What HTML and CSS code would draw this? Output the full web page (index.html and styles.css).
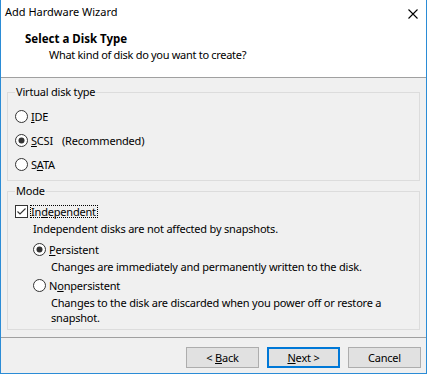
FILE: index.html
```html
<!DOCTYPE html>
<html>
  <head>
    <title>Add Hardware Wizard</title>
    <link rel="stylesheet" href="styles.css">
  </head>
  <body>
    <div class="window">
      <div class="titlebar">
        <span class="title">Add Hardware Wizard</span>
        <svg class="close" width="10" height="10" viewBox="0 0 10 10">
          <path d="M0.5 0.5 L9.5 9.5 M9.5 0.5 L0.5 9.5" stroke="#000" stroke-width="1.1" fill="none" />
        </svg>
      </div>

      <div class="header">
        <div class="heading">Select a Disk Type</div>
        <div class="subheading">What kind of disk do you want to create?</div>
      </div>

      <div class="content">
        <fieldset class="group group-type">
          <legend>Virtual disk type</legend>
          <div class="option">
            <svg class="radio" width="13" height="13" viewBox="0 0 13 13">
              <circle cx="6.5" cy="6.5" r="6" fill="#fff" stroke="#333" />
            </svg>
            <span><u>I</u>DE</span>
          </div>
          <div class="option">
            <svg class="radio" width="13" height="13" viewBox="0 0 13 13">
              <circle cx="6.5" cy="6.5" r="6" fill="#fff" stroke="#333" />
              <circle cx="6.5" cy="6.5" r="3" fill="#333" />
            </svg>
            <span><u>S</u>CSI</span>
            <span class="hint">(Recommended)</span>
          </div>
          <div class="option">
            <svg class="radio" width="13" height="13" viewBox="0 0 13 13">
              <circle cx="6.5" cy="6.5" r="6" fill="#fff" stroke="#333" />
            </svg>
            <span>S<u>A</u>TA</span>
          </div>
        </fieldset>

        <fieldset class="group group-mode">
          <legend>Mode</legend>
          <div class="option small">
            <svg class="check" width="13" height="13" viewBox="0 0 13 13">
              <rect x="0.5" y="0.5" width="12" height="12" fill="#fff" stroke="#333" />
              <path d="M2.5 6.5 L5 9 L10.5 3.5" stroke="#333" stroke-width="1.1" fill="none" />
            </svg>
            <span class="focused">In<u>d</u>ependent</span>
          </div>
          <div class="desc first">Independent disks are not affected by snapshots.</div>
          <div class="sub">
            <div class="option small">
              <svg class="radio" width="13" height="13" viewBox="0 0 13 13">
                <circle cx="6.5" cy="6.5" r="6" fill="#fff" stroke="#333" />
                <circle cx="6.5" cy="6.5" r="3" fill="#333" />
              </svg>
              <span><u>P</u>ersistent</span>
            </div>
            <div class="desc">Changes are immediately and permanently written to the disk.</div>
            <div class="option small">
              <svg class="radio" width="13" height="13" viewBox="0 0 13 13">
                <circle cx="6.5" cy="6.5" r="6" fill="#fff" stroke="#333" />
              </svg>
              <span>N<u>o</u>npersistent</span>
            </div>
            <div class="desc tight">Changes to the disk are discarded when you power off or restore a<br>snapshot.</div>
          </div>
        </fieldset>
      </div>

      <div class="footer">
        <button class="button">&lt; <u>B</u>ack</button>
        <button class="button default"><u>N</u>ext &gt;</button>
        <button class="button">Cancel</button>
      </div>
    </div>
  </body>
</html>
```

FILE: styles.css
```css
body {
  margin: 0;
  padding: 0;
  background-color: #fff;
  color: #000;
  font-family: "Noto Sans", "Open Sans", sans-serif;
  font-size: 11px;
  letter-spacing: -0.2px;
}

.window {
  width: 427px;
  height: 374px;
  box-sizing: border-box;
  border: 1px solid #2b8cd6;
  border-top: none;
  display: flex;
  flex-direction: column;
  background-color: #f0f0f0;
}

.titlebar {
  height: 30px;
  box-sizing: border-box;
  padding: 4px 0 0 4px;
  background-color: #fff;
  display: flex;
  justify-content: space-between;
  align-items: flex-start;
  line-height: 16px;
  font-size: 11px;
  letter-spacing: 0;
}

.close {
  margin: 5px 8px 0 0;
}

.header {
  height: 48px;
  box-sizing: border-box;
  padding: 1px 0 0 24px;
  background-color: #fff;
  border-bottom: 1px solid #a0a0a0;
  line-height: 16px;
}

.heading {
  font-weight: bold;
  font-size: 11.5px;
  letter-spacing: 0;
}

.subheading {
  padding-left: 24px;
  letter-spacing: -0.3px;
}

.content {
  flex: 1;
  padding: 6px 6px 0 6px;
}

.group {
  margin: 0;
  border: 1px solid #dcdcdc;
  padding: 4px 6px 4px 7px;
  min-width: 0;
}

.group legend {
  padding: 0 1px;
  line-height: 16px;
}

.group-mode {
  margin-top: 2px;
  padding: 2px 6px 4px 7px;
}

.option {
  display: flex;
  align-items: center;
  height: 24px;
  white-space: nowrap;
}

.option.small {
  height: 20px;
}

.radio,
.check {
  flex: none;
  margin-right: 3px;
}

.check {
  margin-right: 2px;
}

.hint {
  margin-left: 9px;
}

.focused {
  border: 1px dotted #000;
  line-height: 11px;
  padding-right: 1px;
}

.desc {
  line-height: 16px;
  padding-left: 18px;
  white-space: nowrap;
}

.desc.first {
  margin-bottom: 2px;
}

.sub {
  padding-left: 18px;
}

.desc.tight {
  line-height: 15px;
}

.footer {
  border-top: 1px solid #a0a0a0;
  padding: 9px 5px 5px 0;
  display: flex;
  justify-content: flex-end;
  gap: 8px;
}

.button {
  width: 73px;
  height: 21px;
  box-sizing: border-box;
  padding: 0;
  margin: 0;
  font-family: inherit;
  font-size: 11px;
  letter-spacing: -0.2px;
  color: #000;
  background-color: #e1e1e1;
  border: 1px solid #adadad;
  border-radius: 0;
}

.button.default {
  border: 2px solid #0078d7;
}
```
